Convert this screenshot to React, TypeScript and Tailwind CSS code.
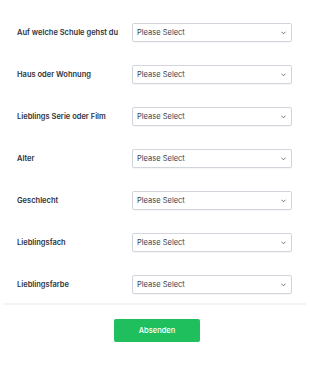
import React from 'react';

const fields = [
  'Auf welche Schule gehst du',
  'Haus oder Wohnung',
  'Lieblings Serie oder Film',
  'Alter',
  'Geschlecht',
  'Lieblingsfach',
  'Lieblingsfarbe',
];

const Chevron: React.FC = () => (
  <svg width="5" height="4" viewBox="0 0 5 4" fill="none" className="text-gray-500">
    <path d="M0.7 1L2.5 2.8L4.3 1" stroke="currentColor" strokeWidth="1" strokeLinecap="round" strokeLinejoin="round" />
  </svg>
);

const App: React.FC = () => {
  return (
    <div className="w-[310px] h-[381px] bg-white" style={{ fontFamily: 'Inter, sans-serif' }}>
      {/* Fields */}
      <div className="flex flex-col gap-[23px] pt-[23px] px-[17px]">
        {fields.map((label) => (
          <div key={label} className="flex items-center">
            <label className="w-[115px] text-[7.5px] font-semibold text-[#2d3340]">{label}</label>
            <div className="w-[160px] h-[19px] flex items-center justify-between border border-gray-300 rounded-[2px] pl-[4px] pr-[5px] shadow-[0_1px_1px_rgba(0,0,0,0.04)]">
              <span className="text-[7.5px] text-gray-700">Please Select</span>
              <Chevron />
            </div>
          </div>
        ))}
      </div>

      {/* Divider */}
      <div className="mt-[9px] ml-[3px] mr-[4px] h-[2px] bg-gray-100" />

      {/* Submit */}
      <div className="flex justify-center pt-[14px] pl-[4px]">
        <button className="w-[86px] h-[23px] rounded-[2px] bg-[#1fbf5e] text-white text-[7.5px] font-medium">
          Absenden
        </button>
      </div>
    </div>
  );
};

export default App;
